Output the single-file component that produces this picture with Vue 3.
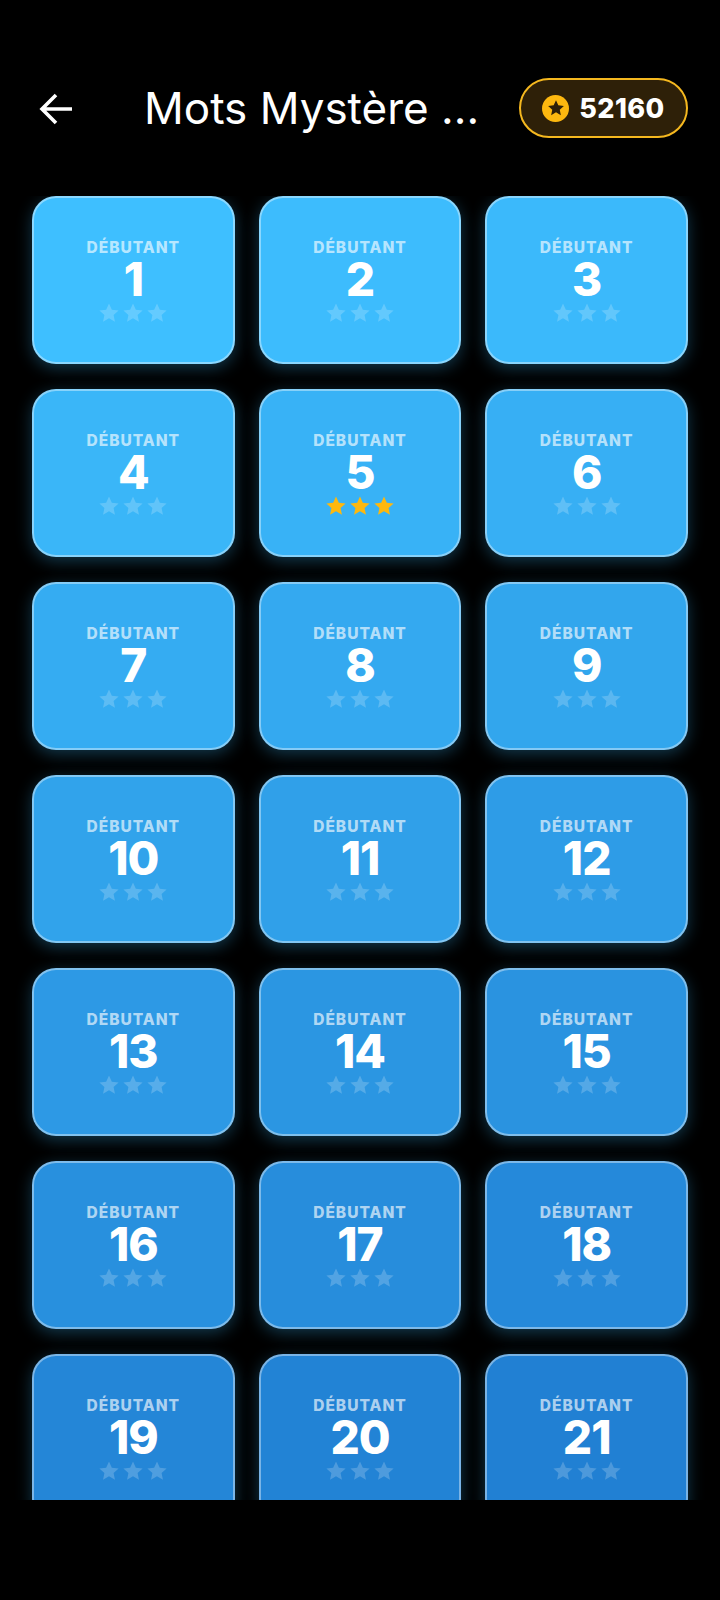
<script setup>
const start = [62, 191, 255]
const end = [33, 128, 211]
const levels = Array.from({ length: 21 }, (_, i) => {
  const t = i / 20
  const c = start.map((s, k) => Math.round(s + (end[k] - s) * t))
  return { n: i + 1, done: i === 4, bg: `rgb(${c.join(',')})` }
})
const starPath = 'M12 1.5l3.1 6.9 7.4.8-5.5 5 1.5 7.3L12 17.8 5.5 21.5 7 14.2l-5.5-5 7.4-.8z'
</script>

<template>
  <div class="page">
    <header class="top">
      <svg class="back" viewBox="0 0 34 34" fill="none" stroke="#fff" stroke-width="3.6">
        <path d="M33 17H3M17 3 3 17l14 14" />
      </svg>
      <h1 class="title">Mots Mystère ...</h1>
      <div class="coins">
        <span class="coin">
          <svg viewBox="0 0 24 24" width="18" height="18"><path :d="starPath" fill="#2e2008" /></svg>
        </span>
        <span class="amount">52160</span>
      </div>
    </header>
    <main class="list">
      <div class="grid">
        <div v-for="l in levels" :key="l.n" class="card" :style="{ background: l.bg }">
          <div class="label">DÉBUTANT</div>
          <div class="num">{{ l.n }}</div>
          <div class="stars" :class="{ done: l.done }">
            <svg v-for="s in 3" :key="s" viewBox="0 0 24 24" width="22" height="22"><path :d="starPath" /></svg>
          </div>
        </div>
      </div>
    </main>
  </div>
</template>

<style>
html, body { margin: 0; background: #000; }
</style>

<style scoped>
.page {
  width: 720px;
  height: 1600px;
  background: #000;
  color: #fff;
  font-family: "Inter", "Noto Sans", sans-serif;
  overflow: hidden;
}
.top {
  height: 196px;
  box-sizing: border-box;
  padding: 78px 32px 0 39px;
  display: flex;
  align-items: flex-start;
}
.back {
  width: 34px;
  height: 34px;
  margin-top: 14px;
  flex: none;
}
.title {
  margin: 0 0 0 71px;
  font-size: 44px;
  line-height: 60px;
  font-weight: 400;
  letter-spacing: 0;
  white-space: nowrap;
  flex: 1;
}
.coins {
  flex: none;
  width: 169px;
  height: 60px;
  box-sizing: border-box;
  border: 2px solid #f5b81f;
  border-radius: 30px;
  background: #2e2008;
  display: flex;
  align-items: center;
  justify-content: center;
  gap: 10px;
}
.coin {
  width: 27px;
  height: 27px;
  border-radius: 50%;
  background: #fdb80f;
  display: flex;
  align-items: center;
  justify-content: center;
}
.amount {
  font-size: 27px;
  font-weight: 800;
  letter-spacing: 0.4px;
}
.list {
  height: 1304px;
  overflow: hidden;
  padding: 0 32px;
}
.grid {
  display: grid;
  grid-template-columns: repeat(3, 1fr);
  column-gap: 24px;
  row-gap: 25px;
}
.card {
  height: 168px;
  box-sizing: border-box;
  border: 2px solid rgba(255, 255, 255, 0.4);
  border-radius: 24px;
  box-shadow: 0 4px 16px rgba(60, 190, 255, 0.3);
  display: flex;
  flex-direction: column;
  align-items: center;
  padding-top: 42px;
}
.label {
  font-size: 15.5px;
  line-height: 16px;
  font-weight: 800;
  letter-spacing: 1px;
  color: rgba(255, 255, 255, 0.65);
}
.num {
  font-size: 46px;
  line-height: 44px;
  font-weight: 800;
  letter-spacing: -1px;
  margin-top: 1px;
}
.stars {
  display: flex;
  gap: 2px;
  margin-top: 1px;
  fill: rgba(255, 255, 255, 0.2);
}
.stars.done {
  fill: #fdb80f;
}
</style>
